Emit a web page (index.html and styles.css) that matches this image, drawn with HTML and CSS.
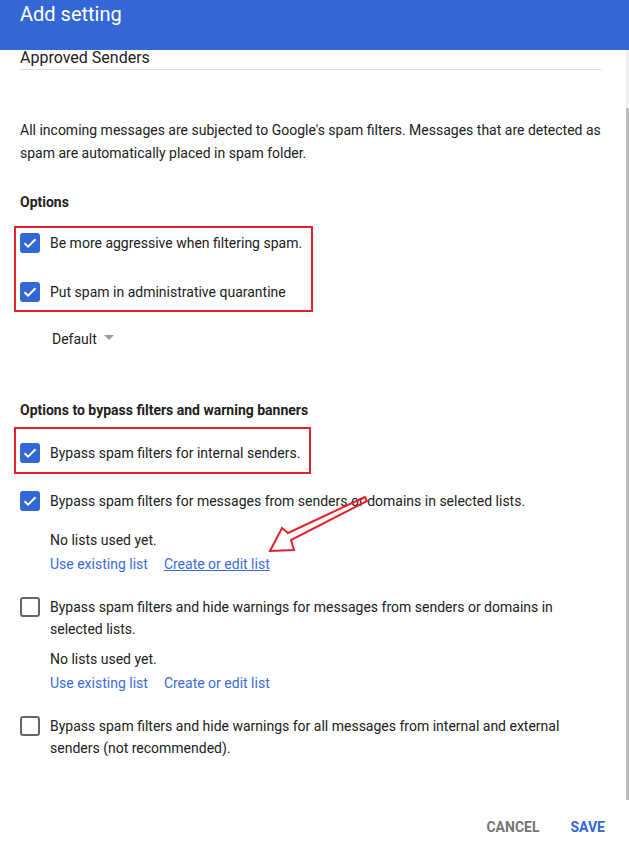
FILE: index.html
```html
<!DOCTYPE html>
<html lang="en">
<head>
    <meta charset="UTF-8">
    <meta name="viewport" content="width=device-width, initial-scale=1.0">
    <title>Add setting</title>
    <link rel="stylesheet" href="styles.css">
</head>
<body>

    <div class="dialog">
        <header class="dialog-header">
            <h1>Add setting</h1>
        </header>

        <div class="dialog-main">
            <div class="dialog-body">
                <div class="name-field">Approved Senders</div>

                <p class="intro">All incoming messages are subjected to Google's spam filters. Messages that are detected as spam are automatically placed in spam folder.</p>

                <h2 class="section-title">Options</h2>

                <div class="highlight highlight-options">
                    <div class="option">
                        <span class="checkbox checked"><svg viewBox="0 0 20 20"><path d="M4.5 10.2l3.6 3.5 7.4-7.4"/></svg></span>
                        <span class="option-text">Be more aggressive when filtering spam.</span>
                    </div>
                    <div class="option option-second">
                        <span class="checkbox checked"><svg viewBox="0 0 20 20"><path d="M4.5 10.2l3.6 3.5 7.4-7.4"/></svg></span>
                        <span class="option-text">Put spam in administrative quarantine</span>
                    </div>
                </div>

                <div class="select">
                    <span>Default</span>
                    <span class="select-arrow"></span>
                </div>

                <h2 class="section-title section-bypass">Options to bypass filters and warning banners</h2>

                <div class="highlight highlight-bypass">
                    <div class="option">
                        <span class="checkbox checked"><svg viewBox="0 0 20 20"><path d="M4.5 10.2l3.6 3.5 7.4-7.4"/></svg></span>
                        <span class="option-text">Bypass spam filters for internal senders.</span>
                    </div>
                </div>

                <div class="option option-lists">
                    <span class="checkbox checked"><svg viewBox="0 0 20 20"><path d="M4.5 10.2l3.6 3.5 7.4-7.4"/></svg></span>
                    <span class="option-text">Bypass spam filters for messages from senders or domains in selected lists.</span>
                </div>
                <div class="lists">
                    <div class="lists-empty">No lists used yet.</div>
                    <div class="lists-links">
                        <a href="#">Use existing list</a>
                        <a href="#" class="hover">Create or edit list</a>
                    </div>
                </div>

                <div class="option option-lists option-spaced">
                    <span class="checkbox"></span>
                    <span class="option-text">Bypass spam filters and hide warnings for messages from senders or domains in selected lists.</span>
                </div>
                <div class="lists">
                    <div class="lists-empty">No lists used yet.</div>
                    <div class="lists-links">
                        <a href="#">Use existing list</a>
                        <a href="#">Create or edit list</a>
                    </div>
                </div>

                <div class="option option-spaced">
                    <span class="checkbox"></span>
                    <span class="option-text">Bypass spam filters and hide warnings for all messages from internal and external senders (not recommended).</span>
                </div>

                <!-- annotation arrow -->
                <svg class="annotation-arrow" width="110" height="64" viewBox="0 0 110 64">
                    <polygon points="106,4 29,40 23,35 11,58 35,57 32,47 108,8" />
                </svg>
            </div>
            <div class="scrollbar">
                <div class="scrollbar-thumb"></div>
            </div>
        </div>

        <footer class="dialog-footer">
            <button class="btn btn-cancel">Cancel</button>
            <button class="btn btn-save">Save</button>
        </footer>
    </div>

</body>
</html>
```

FILE: styles.css
```css
:root {
    --primary-color: #3367d6;
    --link-color: #3b6bd8;
    --text-color: #212121;
    --muted-color: #757575;
    --line-color: #e0e0e0;
    --mark-color: #e3212a;
}

body {
    margin: 0;
    font-family: Roboto, "Liberation Sans", Arial, sans-serif;
    color: var(--text-color);
    background-color: #ffffff;
}

.dialog {
    width: 629px;
    height: 845px;
    display: flex;
    flex-direction: column;
    overflow: hidden;
}

.dialog-header {
    height: 50px;
    flex-shrink: 0;
    background-color: var(--primary-color);
    padding: 0 20px;
}

.dialog-header h1 {
    margin: 0;
    padding-top: 1px;
    font-size: 20px;
    font-weight: 400;
    line-height: 26px;
    color: #ffffff;
}

.dialog-main {
    height: 750px;
    display: flex;
}

.dialog-body {
    flex: 1;
    position: relative;
    padding: 0 24px 0 20px;
    font-size: 14px;
}

.name-field {
    font-size: 16px;
    line-height: 16px;
    padding-bottom: 3px;
    border-bottom: 1px solid var(--line-color);
}

.intro {
    margin: 49px 0 0;
    line-height: 23px;
}

.section-title {
    margin: 27px 0 0;
    font-size: 14px;
    font-weight: 700;
    line-height: 20px;
}

.section-bypass {
    margin-top: 49px;
}

.highlight {
    width: fit-content;
    margin-left: -6px;
    padding: 4px 9px 7px 4px;
    border: 2px solid var(--mark-color);
}

.highlight-options {
    margin-top: 14px;
}

.highlight-bypass {
    margin-top: 7px;
    padding-top: 13px;
    padding-bottom: 8px;
}

.option {
    display: flex;
    align-items: flex-start;
    gap: 10px;
    line-height: 22px;
}

.option-second {
    margin-top: 27px;
}

.option-lists {
    margin-top: 16px;
}

.option-spaced {
    margin-top: 20px;
}

.checkbox {
    flex-shrink: 0;
    width: 20px;
    height: 20px;
    margin-top: 1px;
    border: 2px solid #666666;
    border-radius: 3px;
    box-sizing: border-box;
}

.checkbox.checked {
    border: none;
    background-color: var(--primary-color);
}

.checkbox svg {
    display: block;
    width: 20px;
    height: 20px;
}

.checkbox svg path {
    fill: none;
    stroke: #ffffff;
    stroke-width: 2;
}

.select {
    display: flex;
    align-items: center;
    gap: 7px;
    margin: 15px 0 0 32px;
    line-height: 24px;
}

.select-arrow {
    width: 0;
    height: 0;
    margin-top: -3px;
    border-left: 5px solid transparent;
    border-right: 5px solid transparent;
    border-top: 5px solid #9e9e9e;
}

.lists {
    margin: 16px 0 0 30px;
    line-height: 24px;
}

.option-spaced + .lists {
    margin-top: 7px;
}

.lists-links {
    display: flex;
    gap: 16px;
}

.lists-links a {
    color: var(--link-color);
    text-decoration: none;
}

.lists-links a.hover {
    text-decoration: underline;
}

.annotation-arrow {
    position: absolute;
    left: 259px;
    top: 443px;
}

.annotation-arrow polygon {
    fill: none;
    stroke: var(--mark-color);
    stroke-width: 2;
    stroke-linejoin: miter;
}

.scrollbar {
    width: 3px;
    background-color: #f1f1f1;
    display: flex;
    flex-direction: column;
}

.scrollbar-thumb {
    flex: 1;
    margin-top: 58px;
    background-color: #bdbdbd;
}

.dialog-footer {
    flex: 1;
    display: flex;
    justify-content: flex-end;
    gap: 31px;
    padding: 17px 24px 0 0;
}

.btn {
    padding: 0;
    border: none;
    background: none;
    font-family: inherit;
    font-size: 14px;
    font-weight: 700;
    line-height: 20px;
    text-transform: uppercase;
    height: 20px;
    cursor: pointer;
}

.btn-cancel {
    color: var(--muted-color);
}

.btn-save {
    color: var(--primary-color);
}
```
